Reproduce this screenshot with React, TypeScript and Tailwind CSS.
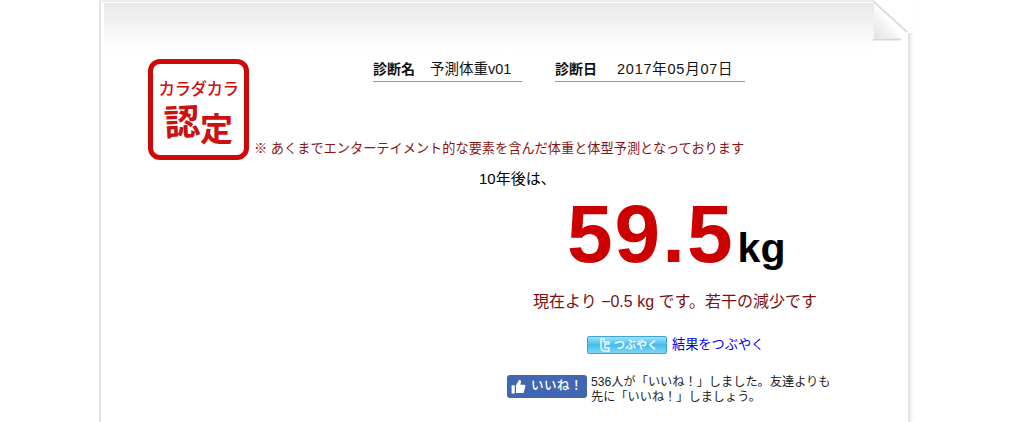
import React from "react";

const font = "font-['Liberation_Sans','Noto_Sans_CJK_JP',sans-serif]";

function Field({ label, value, width, gap, valueClass }: { label: string; value: string; width: string; gap: string; valueClass: string }) {
  return (
    <div className={`${width} ${gap} flex h-[28px] items-center border-b border-[#999] pt-[2px] text-[14px] leading-[26px] text-[#111]`}>
      <span className="font-bold">{label}</span>
      <span className={valueClass}>{value}</span>
    </div>
  );
}

function Fold() {
  return (
    <svg className="absolute right-[-5px] top-[-2px]" width="40" height="44" viewBox="0 0 40 44">
      <defs>
        <linearGradient id="fold" x1="0" y1="1" x2="0.7" y2="0.2">
          <stop offset="0" stopColor="#e2e2e2" />
          <stop offset="0.75" stopColor="#ffffff" />
        </linearGradient>
      </defs>
      <path d="M0 0 H40 V33 H34 Z" fill="#ffffff" />
      <path d="M1 3 L1 38 L29 38 Z" fill="url(#fold)" />
      <path d="M0 1 L34 32" stroke="#dddddd" strokeWidth="2" fill="none" />
      <path d="M0 39.500 L28 39.500" stroke="#d6d6d6" strokeWidth="2" fill="none" />
    </svg>
  );
}

function Stamp() {
  return (
    <div className="flex h-[101px] w-[101px] shrink-0 flex-col items-center rounded-[12px] border-[5px] border-[#cc0a0a] bg-white pt-[15px] text-[#cc1111]">
      <span className="text-[16.500px] font-medium leading-[20px] tracking-[-0.5px] whitespace-nowrap">カラダカラ</span>
      <div className="mt-[6px] flex h-[48px] items-start font-bold leading-none">
        <span className="-rotate-3 text-[36px]">認</span>
        <span className="mt-[8px] text-[33px]">定</span>
      </div>
    </div>
  );
}

export default function App() {
  return (
    <div className={`h-[422px] w-[1024px] overflow-hidden bg-white pl-[99px] ${font}`}>
      <div className="relative h-[460px] w-[811px] border-x-2 border-t-2 border-[#e2e2e2] border-t-[#ececec] px-[3px] pt-[1px] shadow-[2px_0_3px_#eeeeee]">
        <Fold />
        <div className="h-[48px] w-[771px] bg-gradient-to-b from-[#e9e9e9] to-white" />
        <div className="flex pl-[44px] pt-[8px]">
          <Stamp />
          <div className="ml-[6px] flex flex-col">
            <div className="ml-[118px] -mt-[5px] flex gap-[33px]">
              <Field label="診断名" value="予測体重v01" width="w-[149px]" gap="gap-[15px]" valueClass="text-[14.500px]" />
              <Field label="診断日" value="2017年05月07日" width="w-[190px]" gap="gap-[20px]" valueClass="text-[14.500px] tracking-[0.75px]" />
            </div>
            <p className="-ml-[1px] mt-[57px] whitespace-nowrap text-[13.200px] leading-[20px] text-[#8b1414]">
              ※ あくまでエンターテイメント的な要素を含んだ体重と体型予測となっております
            </p>
          </div>
        </div>
        <div className="mt-[9px] flex flex-col">
          <p className="ml-[375px] text-[15px] leading-[20px] text-black">10年後は、</p>
          <div className="ml-[463px] mt-[5px] flex items-baseline font-bold leading-[80px]">
            <span className="text-[82px] tracking-[2px] text-[#cc0000]">59.5</span>
            <span className="ml-[3px] text-[41px] text-black">kg</span>
          </div>
          <p className="ml-[429px] mt-[2px] text-[16px] leading-[24px] text-[#7c1010]">現在より −0.5 kg です。若干の減少です</p>
          <div className="ml-[483px] mt-[22px] flex items-center gap-[5px]">
            <div className="flex h-[18px] w-[80px] items-center justify-center gap-[3px] rounded-[2px] border border-[#3aa6d6] bg-gradient-to-b from-[#9fe0f8] via-[#3dbdec] to-[#7fd6f5] text-[11px] font-bold text-[#e8f8fe]">
              <svg width="15" height="15" viewBox="0 0 15 15" fill="none" stroke="#e8f8fe" strokeWidth="2">
                <path d="M5 1 V9 Q5 13 9 13 H13 V10 H9 V6 H13 V4 H8 V1 Z" strokeWidth="1.500" />
              </svg>
              つぶやく
            </div>
            <a className="text-[13.200px] leading-[18px] text-[#0000ee]">結果をつぶやく</a>
          </div>
          <div className="ml-[403px] mt-[21px] flex items-start gap-[4px]">
            <div className="flex h-[23px] w-[80px] items-center justify-center gap-[5px] rounded-[3px] bg-[#4267b2] text-[12.500px] font-medium tracking-[0.5px] text-white">
              <svg width="15" height="15" viewBox="0 0 24 24" fill="white">
                <path d="M1 10h5v13H1zM8 22V10l5-9c2 0 3 1.500 3 3.500L15 9h6c1.500 0 2.500 1.500 2 3l-2.500 9c-.3 1-1 1.500-2 1.500H8z" />
              </svg>
              いいね！
            </div>
            <p className="w-[240px] text-[12.200px] leading-[15px] text-[#1c1e21]">
              536人が「いいね！」しました。友達よりも先に「いいね！」しましょう。
            </p>
          </div>
        </div>
      </div>
    </div>
  );
}
